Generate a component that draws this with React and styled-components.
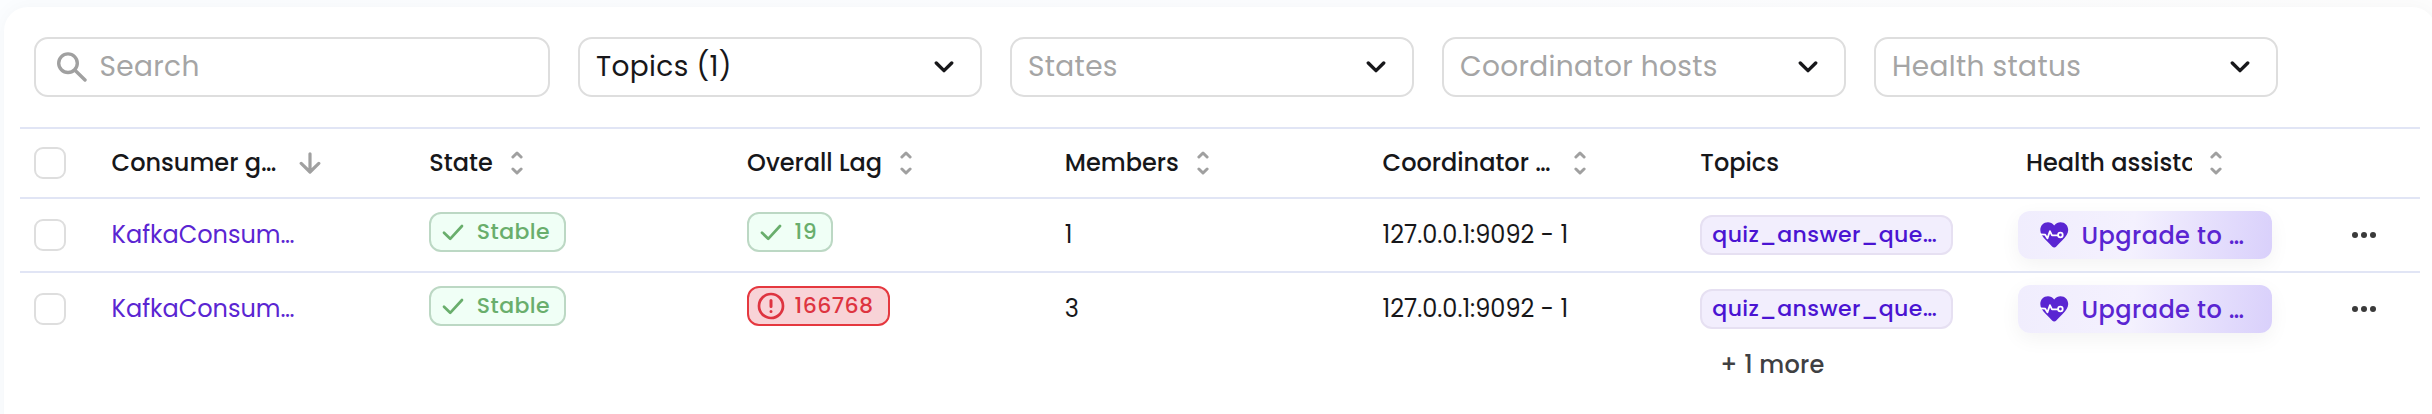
import React from "react";
import styled, { createGlobalStyle } from "styled-components";

const GlobalStyle = createGlobalStyle`
  * { box-sizing: border-box; }
  body {
    margin: 0;
    overflow: hidden;
    background: #fff;
    color: #17171a;
    font-family: Poppins, Inter, "Open Sans", sans-serif;
  }
`;

const Page = styled.div`
  height: 414px;
  padding: 7px 0 0 4px;
  overflow: hidden;
  background: linear-gradient(90deg, #fbfdff 0%, #fcfdff 60%, #fdfdfd 100%);
`;

const Card = styled.main`
  width: 2432px;
  height: 480px;
  padding: 30px 16px 0;
  border-radius: 24px;
  background: #fff;
  box-shadow: 0 0 20px rgba(0, 0, 0, 0.035);
`;

const Toolbar = styled.div`
  display: flex;
  gap: 28px;
  padding: 0 14px 30px;
`;

const Field = styled.div`
  display: flex;
  align-items: center;
  height: 60px;
  border: 2px solid #dedede;
  border-radius: 14px;
  background: #fff;
`;

const SearchField = styled(Field)`
  width: 516px;
  gap: 12.5px;
  padding-left: 21px;
`;

const SelectField = styled(Field)`
  width: 404px;
  justify-content: space-between;
  padding: 0 26px 0 16px;
`;

const Text = styled.span`
  display: block;
  flex: none;
  white-space: nowrap;
`;

const FieldText = styled(Text)`
  padding-bottom: 1px;
  font-size: 28px;
  line-height: 42px;
  letter-spacing: 0.35px;
  color: ${(p) => (p.$filled ? "#17171a" : "#a5a5a5")};
`;

const Row = styled.div`
  display: grid;
  grid-template-columns: 77.6px repeat(7, 317.75px) 1fr;
  align-items: start;
  width: 2400px;
  height: ${(p) => p.$height}px;
  padding: 12px 0 0 14px;
  overflow: hidden;
  border-top: 2px solid #e1e5f5;
`;

const HeaderRow = styled(Row)`
  align-items: center;
  padding-top: 0;
`;

const Checkbox = styled.span`
  display: block;
  width: 32px;
  height: 32px;
  margin-top: ${(p) => p.$offset || 0}px;
  border: 2px solid #dedede;
  border-radius: 9px;
`;

const HeadCell = styled.div`
  display: flex;
  align-items: center;
  gap: ${(p) => p.$gap || 18.3}px;
  padding-left: ${(p) => p.$indent || 0}px;
`;

const HeadText = styled(Text)`
  max-width: ${(p) => (p.$max ? `${p.$max}px` : "none")};
  overflow: hidden;
  font-size: 24px;
  font-weight: 500;
  line-height: 36px;
`;

const CellText = styled(Text)`
  font-size: 24px;
  line-height: 47px;
  color: ${(p) => (p.$link ? "#5a25d2" : "#17171a")};
`;

const tones = {
  good: { ink: "#69ae6c", line: "#bcd8c4", fill: "#f0fff6" },
  bad: { ink: "#de3440", line: "#e5383f", fill: "#f8d3d7" },
};

const Badge = styled.span`
  display: inline-flex;
  align-items: center;
  gap: 9.5px;
  height: 40px;
  margin-top: 1px;
  padding: 0 14px 0 8px;
  border: 2px solid ${(p) => tones[p.$tone].line};
  border-radius: 12px;
  background: ${(p) => tones[p.$tone].fill};
  color: ${(p) => tones[p.$tone].ink};
`;

const BadgeText = styled(Text)`
  padding-bottom: 1px;
  font-size: 22px;
  font-weight: 500;
  line-height: 34px;
  letter-spacing: 0.42px;
`;

const TopicChip = styled.span`
  display: flex;
  align-items: center;
  width: 253px;
  height: 40px;
  margin-top: 4px;
  padding: 0 0 1px 10px;
  border: 2px solid #e6e0f2;
  border-radius: 12px;
  background: #f2eefd;
  color: #4a14d2;
  font-size: 22px;
  font-weight: 500;
  letter-spacing: 0.4px;
`;

const MoreTopics = styled(Text)`
  margin: 18px 0 0 20px;
  color: #3f4043;
  font-size: 24px;
  font-weight: 500;
  line-height: 36px;
  letter-spacing: 0.25px;
`;

const UpgradeButton = styled.button`
  display: flex;
  align-items: center;
  gap: 12.5px;
  width: 254px;
  height: 48px;
  padding: 0 0 0 22px;
  border: 0;
  border-radius: 12px;
  background: linear-gradient(97deg, #f0edfd 0%, #f4f1fe 45%, #d9d0fb 100%);
  box-shadow: 0 6px 20px rgba(0, 0, 0, 0.05);
  color: #5a25d2;
  font: inherit;
  font-size: 24px;
  font-weight: 500;
  letter-spacing: 0.44px;
`;

const MenuButton = styled.span`
  display: flex;
  align-items: center;
  height: 48px;
  padding-left: 16px;
`;

const Icon = styled.svg`
  display: block;
  flex: none;
  fill: none;
  stroke: ${(p) => p.$color || "currentColor"};
  stroke-width: ${(p) => p.$weight ?? 3};
  stroke-linecap: round;
  stroke-linejoin: round;
`;

const SearchIcon = () => (
  <Icon width="30" height="30" $color="#a0a0a0" $weight={3.4}>
    <circle cx="11" cy="11.2" r="9.3" />
    <path d="M18 18.2 28 28" />
  </Icon>
);

const ChevronIcon = () => (
  <Icon width="20" height="12" $color="#17171a" $weight={3.4}>
    <path d="M2.3 2 10 9.6 17.7 2" />
  </Icon>
);

const SortIcon = () => (
  <Icon width="12" height="24" $color="#a0a0a0" $weight={3}>
    <path d="M1.9 6 6 2l4.1 4M1.9 18 6 22l4.1-4" />
  </Icon>
);

const ArrowIcon = () => (
  <Icon width="22" height="22" $color="#a0a0a0" $weight={3.2}>
    <path d="M11 1.8v18M2.2 11.4l8.8 8.6 8.8-8.6" />
  </Icon>
);

const CheckIcon = () => (
  <Icon width="28" height="28" $weight={2.7}>
    <path d="M5 14.8l6.2 6L23 8" />
  </Icon>
);

const AlertIcon = () => (
  <Icon width="28" height="28" $weight={2.7}>
    <circle cx="14" cy="14" r="12" />
    <path d="M14 8.4v6M14 19.4v.2" strokeWidth="3" />
  </Icon>
);

const HeartIcon = () => (
  <Icon width="29" height="26" viewBox="0 0 29 26" $weight={1.8}>
    <path
      d="M14.2 3.4C12.4 1.2 10.3.2 8 .2 3.5.2.3 3.5.3 8c0 3.600 2.100 6.700 5.500 10.100 2.100 2.100 4.400 4.200 6.300 6.300 1.200 1.300 3 1.300 4.200 0 1.900-2.100 4.200-4.200 6.300-6.300C26 14.700 28.200 11.600 28.200 8c0-4.500-3.200-7.800-7.700-7.800-2.300 0-4.500 1-6.300 3.200Z"
      fill="#5a25d2"
      stroke="none"
    />
    <path d="M0 12.4 5.200 12.700 7.400 16.400 9.900 9.200 12 13.300h5.600" stroke="#fff" />
    <circle cx="20.4" cy="13" r="2.3" stroke="#fff" />
  </Icon>
);

const DotsIcon = () => (
  <Icon width="24" height="6" $weight={0}>
    <circle cx="3" cy="3" r="3" fill="#3a3a3a" />
    <circle cx="12" cy="3" r="3" fill="#3a3a3a" />
    <circle cx="21" cy="3" r="3" fill="#3a3a3a" />
  </Icon>
);

const filters = [
  { label: "Topics (1)", filled: true },
  { label: "States" },
  { label: "Coordinator hosts" },
  { label: "Health status" },
];

const headers = [
  { label: "Consumer g…", gap: 22.4, icon: <ArrowIcon /> },
  { label: "State", icon: <SortIcon /> },
  { label: "Overall Lag", icon: <SortIcon /> },
  { label: "Members", icon: <SortIcon /> },
  { label: "Coordinator …", gap: 24, icon: <SortIcon /> },
  { label: "Topics" },
  { label: "Health assistant", indent: 8, max: 165.5, icon: <SortIcon /> },
];

const groups = [
  { name: "KafkaConsum…", lag: "19", tone: "good", members: "1", height: 74 },
  { name: "KafkaConsum…", lag: "166768", tone: "bad", members: "3", more: "+ 1 more", height: 140 },
];

export default function App() {
  return (
    <>
      <GlobalStyle />
      <Page>
        <Card>
          <Toolbar>
            <SearchField>
              <SearchIcon />
              <FieldText>Search</FieldText>
            </SearchField>
            {filters.map((f) => (
              <SelectField key={f.label}>
                <FieldText $filled={f.filled}>{f.label}</FieldText>
                <ChevronIcon />
              </SelectField>
            ))}
          </Toolbar>
          <HeaderRow $height={70}>
            <Checkbox />
            {headers.map((h) => (
              <HeadCell key={h.label} $gap={h.gap} $indent={h.indent}>
                <HeadText $max={h.max}>{h.label}</HeadText>
                {h.icon}
              </HeadCell>
            ))}
          </HeaderRow>
          {groups.map((g, i) => (
            <Row key={i} $height={g.height}>
              <Checkbox $offset={8} />
              <CellText $link>{g.name}</CellText>
              <div>
                <Badge $tone="good">
                  <CheckIcon />
                  <BadgeText>Stable</BadgeText>
                </Badge>
              </div>
              <div>
                <Badge $tone={g.tone}>
                  {g.tone === "good" ? <CheckIcon /> : <AlertIcon />}
                  <BadgeText>{g.lag}</BadgeText>
                </Badge>
              </div>
              <CellText>{g.members}</CellText>
              <CellText>127.0.0.1:9092 - 1</CellText>
              <div>
                <TopicChip>
                  <Text>quiz_answer_que…</Text>
                </TopicChip>
                {g.more && <MoreTopics>{g.more}</MoreTopics>}
              </div>
              <UpgradeButton>
                <HeartIcon />
                <Text>Upgrade to …</Text>
              </UpgradeButton>
              <MenuButton>
                <DotsIcon />
              </MenuButton>
            </Row>
          ))}
        </Card>
      </Page>
    </>
  );
}
